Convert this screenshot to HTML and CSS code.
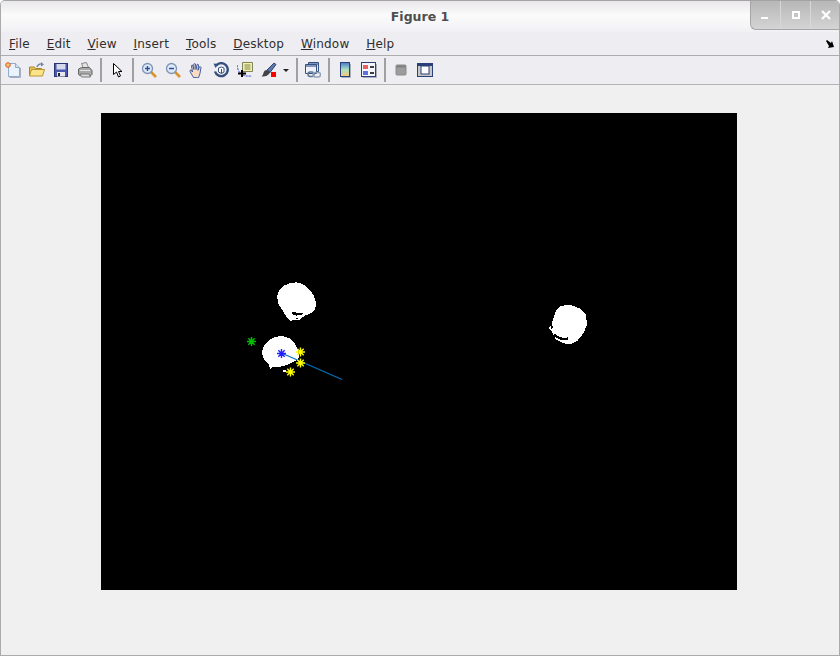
FILE: index.html
```html
<!DOCTYPE html>
<html lang="en">
<head>
<meta charset="utf-8">
<title>Figure 1</title>
<link rel="stylesheet" href="styles.css">
</head>
<body>
<div class="window">
  <header class="titlebar">
    <span class="title">Figure 1</span>
    <div class="wm-buttons">
      <span class="wm-btn"><svg width="10" height="10" viewBox="0 0 10 10"><rect x="0" y="7" width="7" height="2" fill="#fff"/></svg></span>
      <span class="wm-btn"><svg width="10" height="10" viewBox="0 0 10 10"><path d="M1 1h8v8h-8z M3 3v4h4v-4z" fill="#fff" fill-rule="evenodd"/></svg></span>
      <span class="wm-btn"><svg width="10" height="10" viewBox="0 0 10 10"><path d="M1 1l8 8M9 1l-8 8" stroke="#fff" stroke-width="2.200" fill="none"/></svg></span>
    </div>
  </header>
  <nav class="menubar">
    <span class="menu-item"><u>F</u>ile</span>
    <span class="menu-item"><u>E</u>dit</span>
    <span class="menu-item"><u>V</u>iew</span>
    <span class="menu-item"><u>I</u>nsert</span>
    <span class="menu-item"><u>T</u>ools</span>
    <span class="menu-item"><u>D</u>esktop</span>
    <span class="menu-item"><u>W</u>indow</span>
    <span class="menu-item"><u>H</u>elp</span>
    <svg class="dock" width="8" height="8" viewBox="0 0 8 8"><path d="M0 1l1-1 4 3 1-2 2 6-6 1 1-2z" fill="#000"/></svg>
  </nav>
  <div class="toolbar">
    <svg class="tool" viewBox="0 0 16 16"><path d="M3.500 1.500h7l4 4v9h-11z" fill="#eaf3fc" stroke="#93a9cb"/><path d="M15.500 6v9.500h-11" stroke="#a6aec0" fill="none"/><path d="M10.500 1.500v4h4" fill="#cfe0f2" stroke="#93a9cb"/><circle cx="3" cy="3" r="2.300" fill="#f7c66b" stroke="#d8562c"/></svg>
    <svg class="tool" viewBox="0 0 16 16"><path d="M.5 14v-9h5l1 1.500h6v2" fill="#e8c458" stroke="#a8862a"/><path d="M.5 14l2-6.500h13l-2 6.500z" fill="#fbe38a" stroke="#b8962f"/><path d="M8 5q1-3.500 5-3" stroke="#6f86a8" stroke-width="1.300" fill="none"/><path d="M12 0l3 2.500-3 2z" fill="#6f86a8"/></svg>
    <svg class="tool" viewBox="0 0 16 16"><rect x="1.500" y="1.500" width="13" height="13" fill="#4a59ad" stroke="#2a3373"/><rect x="3.500" y="2" width="9" height="5.500" fill="#d5d9ec"/><rect x="4" y="10" width="8" height="4.500" fill="#e8e8e8"/><rect x="5" y="11" width="2" height="3" fill="#222"/></svg>
    <svg class="tool" viewBox="0 0 16 16"><path d="M4.500 1.500l5-1 2 5-5 1z" fill="#e4e4e4" stroke="#888"/><path d="M1.500 7l3-1.500h8l2.500 3v4l-1 1h-11.500l-1-1.500z" fill="#a9a9a9" stroke="#666"/><path d="M3 12h9l1.500 3h-9z" fill="#ddd" stroke="#777"/><path d="M3 8.500h10" stroke="#e4e4e4"/></svg>
    <span class="sep"></span>
    <svg class="tool" viewBox="0 0 16 16"><path d="M4.500 1.500v11l3-2.500 2 5 2-1-2-4.500h3.500z" fill="#fff" stroke="#000"/></svg>
    <span class="sep"></span>
    <svg class="tool" viewBox="0 0 16 16"><path d="M10 10l5 5" stroke="#d9932d" stroke-width="2.600"/><circle cx="6.500" cy="6.500" r="5" fill="#dceaf7" stroke="#7e93b5" stroke-width="1.300"/><path d="M4 6.500h5M6.500 4v5" stroke="#2b4f9e" stroke-width="1.400"/></svg>
    <svg class="tool" viewBox="0 0 16 16"><path d="M10 10l5 5" stroke="#d9932d" stroke-width="2.600"/><circle cx="6.500" cy="6.500" r="5" fill="#dceaf7" stroke="#7e93b5" stroke-width="1.300"/><path d="M4 6.500h5" stroke="#2b4f9e" stroke-width="1.400"/></svg>
    <svg class="tool" viewBox="0 0 16 16"><path d="M4.500 15.500l-3.500-6q-.5-1.500 1-1.500l1.500 2-1-6q0-1 1-1l1.500 4.500-.2-5.500q.8-1 1.700 0l.5 5.500 1-5q1-.8 1.500.3l-.5 5.500 1.500-3.500q1.200-.5 1.500.5l-1 6-1.500 4.500z" fill="#fbdcc0" stroke="#2f4f9e" stroke-width=".9"/></svg>
    <svg class="tool" viewBox="0 0 16 16"><path d="M3.200 3.500a6.500 6.500 0 1 1-1.200 6" fill="none" stroke="#34507f" stroke-width="2.400"/><path d="M.5 1.500l5 .5-3 4z" fill="#34507f"/><path d="M5.500 6l3-1 2.500 1v4l-2.500 1.500-3-1.500z" fill="#fff" stroke="#34507f"/><path d="M8.500 7v4" stroke="#34507f"/></svg>
    <svg class="tool" viewBox="0 0 16 16"><path d="M5.500.5h10v9h-10z" fill="#f5f1a8" stroke="#7d8458"/><path d="M7.500 3h6M7.500 5h6M7.500 7h6" stroke="#7d8458"/><path d="M0 3q1 8 6 10q3 1.500 9 1" stroke="#2b3fd0" stroke-dasharray="2 1" fill="none"/><path d="M1 11.500h8M5 8v7" stroke="#000" stroke-width="2"/></svg>
    <svg class="tool" viewBox="0 0 16 16"><path d="M6 8l7-7 2 1.500-6 8z" fill="#5b77b0" stroke="#33476f"/><path d="M6 8q-3 0-3.500 3q-.5 2-2 3.500q5 .5 7-2l2-2.500z" fill="#444"/><rect x="10" y="10" width="5" height="5" fill="#f00"/></svg>
    <svg class="tool-arrow" viewBox="0 0 8 16"><path d="M1 7h6l-3 3z" fill="#222"/></svg>
    <span class="sep"></span>
    <svg class="tool" viewBox="0 0 16 16"><path d="M3.500.5h10v9h-10z" fill="#dfe6f3" stroke="#34507f"/><rect x="4" y="1" width="9" height="2" fill="#7f96bd"/><path d="M.5 2.500h11v9h-11z" fill="#eef2f8" stroke="#34507f"/><rect x="1" y="3" width="10" height="2" fill="#7f96bd"/><rect x="3" y="10" width="6" height="4.500" rx="2.200" fill="none" stroke="#5d7691" stroke-width="1.500"/><rect x="8" y="10.500" width="7.500" height="4.500" rx="2.200" fill="none" stroke="#8fa4b8" stroke-width="1.500"/></svg>
    <span class="sep"></span>
    <svg class="tool" viewBox="0 0 16 16"><defs><linearGradient id="cb" x1="0" y1="0" x2="0" y2="1"><stop offset="0" stop-color="#4a78d0"/><stop offset=".5" stop-color="#a8e0c0"/><stop offset="1" stop-color="#f8c878"/></linearGradient></defs><rect x="3.500" y=".5" width="9" height="14" fill="url(#cb)" stroke="#2a3f78"/><path d="M13.500 2v13.500h-9" stroke="#a9aebc" fill="none"/></svg>
    <svg class="tool" viewBox="0 0 16 16"><rect x=".5" y=".5" width="14" height="14" fill="#f4f6fb" stroke="#2a3f78"/><path d="M15.500 2v13.500h-14" stroke="#a9aebc" fill="none"/><rect x="2" y="3" width="5" height="4" fill="#e96060"/><rect x="2" y="9" width="5" height="4" fill="#6070e0"/><path d="M9 5h4M9 11h4" stroke="#000" stroke-width="1.300"/></svg>
    <span class="sep"></span>
    <svg class="tool" viewBox="0 0 16 16"><rect x="3" y="3" width="10" height="10" rx="1" fill="#9c9c9c" stroke="#8a8a8a"/><rect x="3.500" y="3.500" width="9" height="2" fill="#808080"/></svg>
    <svg class="tool" viewBox="0 0 16 16"><rect x=".5" y="1.500" width="15" height="13" fill="#c8c8c8" stroke="#2a3f78"/><rect x="1" y="2" width="14" height="2" fill="#2a3f78"/><rect x="4" y="4" width="8" height="8" fill="#fff" stroke="#2a3f78"/></svg>
  </div>
  <main class="figure">
    <div class="plot">
      <svg class="plot-art" viewBox="101 113 636 477" shape-rendering="crispEdges">
        <g transform="translate(240 270) scale(.33333)" fill="#fff">
          <path d="M112 75L118 62 130 48 148 40 168 37 188 42 198 50 212 62 222 78 228 97 226 118 214 128 204 133 196 136 190 140 184 146 178 150 150 152 140 142 131 126 122 113 113 98Z"/>
          <path d="M66 244L72 226 88 209 108 200 128 198 150 205 165 222 172 235 178 262 172 270 158 276 140 285 122 290 100 290 92 297 86 284 74 272 68 258Z"/>
          <path d="M129 300h9v6h-9z"/>
        </g>
        <g transform="translate(240 270) scale(.33333)" fill="#000">
          <path d="M156 126h9l3 3h18l3 3-6 3-9 0-3 3-6-3h-6z"/>
          <path d="M168 144h6v3h-6z"/>
        </g>
        <g transform="translate(540 295) scale(.33333)" fill="#fff">
          <path d="M50 45L62 33 80 30 100 32 122 42 138 60 141 90 130 115 112 138 92 147 78 147 60 140 46 132 44 125 32 105 27 100 36 85 40 70 44 58Z"/>
        </g>
        <g transform="translate(540 295) scale(.33333)" fill="#000">
          <path d="M33 86l4-1 1 15-4 2z"/>
          <path d="M42 115l8 6 14 6 12 3 6-4 3 8-8 2-16-2-12-5-6-6z"/>
        </g>
        <path d="M282.500 353.500L342 379.500" stroke="#0072bd" stroke-width="1.200" fill="none" shape-rendering="auto"/>
        <g fill="none" stroke-width="1.400" shape-rendering="auto">
          <path d="M247 341.500h9M251.500 337v9M248.300 338.300l6.400 6.400M254.700 338.300l-6.400 6.400" stroke="#00c000"/>
          <path d="M296 352h9M300.500 347.500v9M297.300 348.800l6.400 6.400M303.700 348.800l-6.400 6.400" stroke="#ff0"/>
          <path d="M296 363h9M300.500 358.500v9M297.300 359.800l6.400 6.400M303.700 359.800l-6.400 6.400" stroke="#ff0"/>
          <path d="M286 372h9M290.500 367.500v9M287.300 368.800l6.400 6.400M293.700 368.800l-6.400 6.400" stroke="#ff0"/>
          <path d="M277 353.500h9M281.500 349v9M278.300 350.300l6.400 6.400M284.700 350.300l-6.400 6.400" stroke="#2222ff"/>
        </g>
      </svg>
    </div>
  </main>
</div>
</body>
</html>
```

FILE: styles.css
```css
html, body {
  margin: 0;
  padding: 0;
  height: 100%;
  background: #fff;
}
body {
  font-family: "DejaVu Sans", sans-serif;
}
.window {
  box-sizing: border-box;
  width: 840px;
  height: 656px;
  display: flex;
  flex-direction: column;
  background: #f0f0f0;
  border: 1px solid #aaa;
  border-top-color: #a4a4a4;
  border-radius: 5px 5px 0 0;
  overflow: hidden;
}
.titlebar {
  flex: none;
  height: 31px;
  display: flex;
  align-items: center;
  justify-content: center;
  position: relative;
  background: linear-gradient(#e9e7ea 0, #fbfbfb 14px, #f1f0f4 31px);
}
.title {
  font-size: 12.500px;
  font-weight: 700;
  color: #4e4e4e;
  margin-top: -1px;
}
.wm-buttons {
  position: absolute;
  top: -1px;
  right: -1px;
  height: 29px;
  display: flex;
  background: linear-gradient(#b6b6b6, #d4d4d4);
  border: 1px solid #a6a6a6;
  border-top: 0;
  border-right: 0;
  border-radius: 0 0 0 6px;
}
.wm-btn {
  width: 29px;
  display: flex;
  align-items: center;
  justify-content: center;
  border-left: 1px solid #d8d8d8;
}
.wm-btn:first-child {
  border-left: 0;
}
.menubar {
  flex: none;
  height: 24px;
  box-sizing: border-box;
  display: flex;
  align-items: center;
  padding: 0 5px 0 8px;
  gap: 16.750px;
  font-size: 12px;
  letter-spacing: .2px;
  color: #2e2e2e;
  background: #eeedf1;
  border-bottom: 1px solid #acacac;
}
.menu-item {
  white-space: nowrap;
}
.dock {
  margin-left: auto;
}
.toolbar {
  flex: none;
  height: 29px;
  box-sizing: border-box;
  display: flex;
  align-items: center;
  padding: 0 0 0 4px;
  gap: 8px;
  background: #eeedf1;
  border-bottom: 1px solid #b4b4b4;
}
.tool {
  width: 16px;
  height: 16px;
  flex: none;
}
.tool-arrow {
  width: 8px;
  height: 16px;
  flex: none;
  margin: 0 -1px 0 -3px;
}
.sep {
  width: 2px;
  height: 24px;
  flex: none;
  margin: 0 -1px;
  background: #a0a0a0;
}
.figure {
  flex: 1;
  min-height: 0;
  padding: 28px 0 0 100px;
  background: #f0f0f0;
}
.plot {
  width: 636px;
  height: 477px;
  background: #000;
}
.plot-art {
  display: block;
  width: 636px;
  height: 477px;
}
```
